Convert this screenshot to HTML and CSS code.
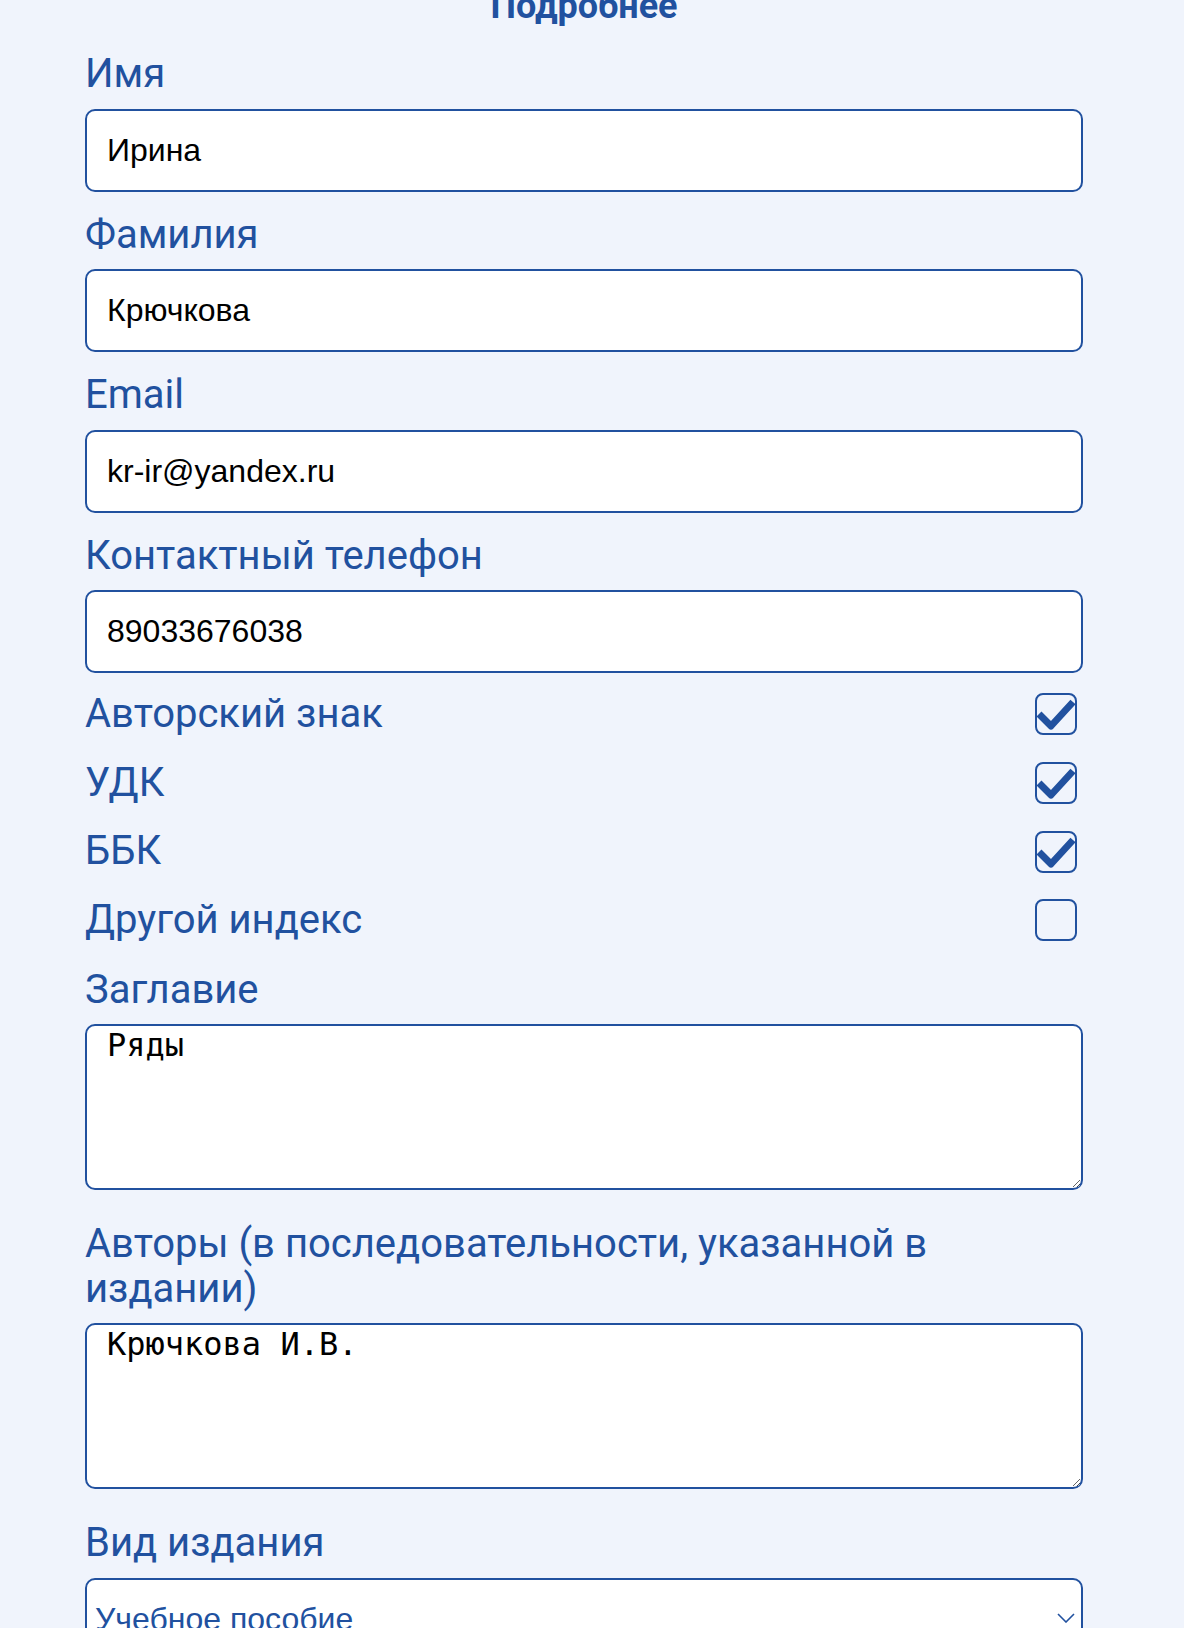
FILE: index.html
```html
<!DOCTYPE html>
<html lang="ru">
<head>
<meta charset="utf-8">
<title>Подробнее</title>
<link rel="stylesheet" href="styles.css">
</head>
<body>
<div class="panel">
  <form class="form">
    <h2 class="title">Подробнее</h2>

    <div class="field first">
      <label class="label" for="f-name">Имя</label>
      <input class="input" id="f-name" type="text" value="Ирина">
    </div>
    <div class="field">
      <label class="label" for="f-surname">Фамилия</label>
      <input class="input" id="f-surname" type="text" value="Крючкова">
    </div>
    <div class="field">
      <label class="label" for="f-email">Email</label>
      <input class="input" id="f-email" type="text" value="kr-ir@yandex.ru">
    </div>
    <div class="field">
      <label class="label" for="f-phone">Контактный телефон</label>
      <input class="input" id="f-phone" type="text" value="89033676038">
    </div>

    <div class="checks">
      <div class="check-row">
        <span class="label">Авторский знак</span>
        <span class="box"><svg viewBox="0 0 42 42" width="42" height="42"><polyline points="4,21 16,33 38,9" fill="none" stroke="#21519f" stroke-width="7" stroke-linejoin="round"/></svg></span>
      </div>
      <div class="check-row">
        <span class="label">УДК</span>
        <span class="box"><svg viewBox="0 0 42 42" width="42" height="42"><polyline points="4,21 16,33 38,9" fill="none" stroke="#21519f" stroke-width="7" stroke-linejoin="round"/></svg></span>
      </div>
      <div class="check-row">
        <span class="label">ББК</span>
        <span class="box"><svg viewBox="0 0 42 42" width="42" height="42"><polyline points="4,21 16,33 38,9" fill="none" stroke="#21519f" stroke-width="7" stroke-linejoin="round"/></svg></span>
      </div>
      <div class="check-row">
        <span class="label">Другой индекс</span>
        <span class="box"></span>
      </div>
    </div>

    <div class="field after-checks">
      <label class="label" for="f-title">Заглавие</label>
      <textarea class="textarea" id="f-title">Ряды</textarea>
    </div>
    <div class="field after-area">
      <label class="label" for="f-authors">Авторы (в последовательности, указанной в издании)</label>
      <textarea class="textarea" id="f-authors">Крючкова И.В.</textarea>
    </div>
    <div class="field after-area">
      <label class="label" for="f-kind">Вид издания</label>
      <div class="select-wrap">
        <select class="select" id="f-kind">
          <option>Учебное пособие</option>
        </select>
        <svg class="chevron" viewBox="0 0 18 10" width="18" height="10"><polyline points="1,1 9,9 17,1" fill="none" stroke="#21519f" stroke-width="1.6"/></svg>
      </div>
    </div>
  </form>
</div>
</body>
</html>
```

FILE: styles.css
```css
html, body {
  margin: 0;
  padding: 0;
  background: #ffffff;
}

.panel {
  width: 1184px;
  min-height: 1628px;
  background: #f0f4fc;
  box-sizing: border-box;
  padding: 0 101px 0 85px;
}

.form {
  display: flex;
  flex-direction: column;
  width: 998px;
}

.title {
  margin: -15px 0 0 0;
  font-family: "Roboto", "Liberation Sans", sans-serif;
  font-weight: 700;
  font-size: 36px;
  line-height: normal;
  color: #21519f;
  text-align: center;
}

.field {
  display: flex;
  flex-direction: column;
  margin-top: 21px;
}

.field.first {
  margin-top: 25px;
}

.field.after-checks {
  margin-top: 13px;
}

.field.after-area {
  margin-top: 32px;
}

.label {
  display: block;
  font-family: "Roboto", "Liberation Sans", sans-serif;
  font-size: 40px;
  line-height: 44.5px;
  color: #21519f;
}

.field .label {
  margin-bottom: 12px;
}

.input {
  display: block;
  box-sizing: border-box;
  width: 998px;
  height: 83px;
  margin: 0;
  padding: 0 20px;
  border: 2px solid #21519f;
  border-radius: 10px;
  background: #ffffff;
  font-family: "Liberation Sans", Arial, sans-serif;
  font-size: 32px;
  color: #000000;
  outline: none;
}

.checks {
  display: flex;
  flex-direction: column;
  margin-top: 7px;
}

.check-row {
  display: flex;
  align-items: center;
  justify-content: space-between;
  height: 68.7px;
}

.box {
  box-sizing: border-box;
  width: 42px;
  height: 42px;
  margin-right: 6px;
  border: 2px solid #21519f;
  border-radius: 8px;
  position: relative;
  overflow: visible;
}

.box svg {
  position: absolute;
  left: -2px;
  top: -2px;
}

.textarea {
  display: block;
  box-sizing: border-box;
  width: 998px;
  height: 166px;
  margin: 0;
  padding: 0 20px;
  border: 2px solid #21519f;
  border-radius: 10px;
  background: #ffffff;
  font-family: "DejaVu Sans Mono", "Liberation Mono", monospace;
  font-size: 32px;
  line-height: normal;
  color: #000000;
  outline: none;
}

.select-wrap {
  position: relative;
  width: 998px;
}

.select {
  display: block;
  box-sizing: border-box;
  width: 998px;
  height: 82px;
  margin: 0;
  padding: 0 40px 0 8px;
  border: 2px solid #21519f;
  border-radius: 10px;
  background: #ffffff;
  -webkit-appearance: none;
  appearance: none;
  font-family: "Liberation Sans", Arial, sans-serif;
  font-size: 32px;
  color: #21519f;
  outline: none;
}

.chevron {
  position: absolute;
  right: 8px;
  top: 35px;
}
```
